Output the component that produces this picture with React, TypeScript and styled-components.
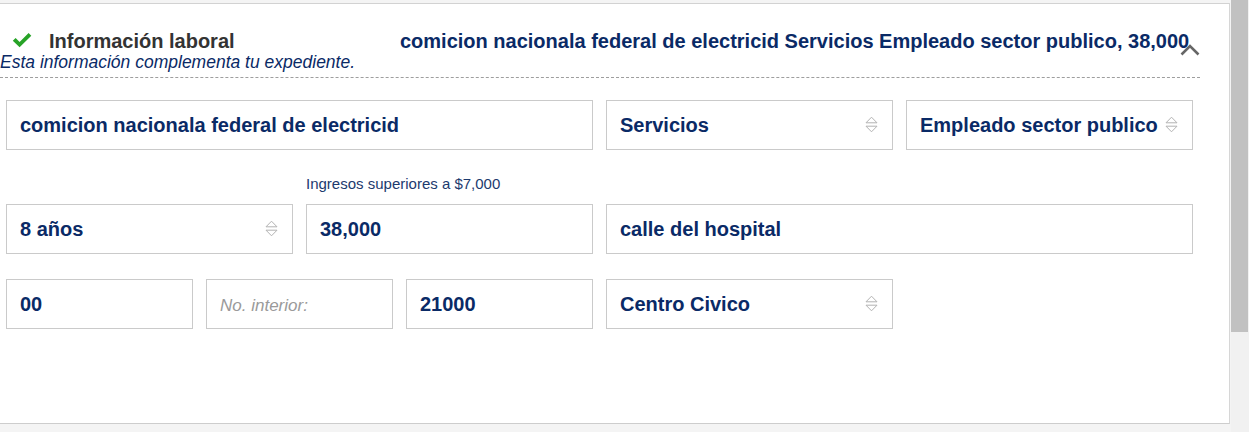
import styled, { createGlobalStyle, css } from 'styled-components'

const NAVY = '#0a2a66'

const GlobalStyle = createGlobalStyle`
  html, body {
    margin: 0;
    padding: 0;
    background: #f4f4f4;
    font-family: 'Liberation Sans', Arial, sans-serif;
  }
`

const Page = styled.div`
  display: flex;
  height: 432px;
  overflow: hidden;
  background: #f4f4f4;
`

const Main = styled.div`
  flex: 0 0 1231px;
  padding-top: 3px;
`

const Panel = styled.section`
  box-sizing: border-box;
  width: 1230px;
  height: 421px;
  background: #fff;
  border-top: 1px solid #d2d2d2;
  border-right: 1px solid #d6d6d6;
  border-bottom: 1px solid #cdcdcd;
`

const Scrollbar = styled.div`
  flex: 1;
  display: flex;
  flex-direction: column;
  padding-right: 1px;
  background: #f1f1f1;
`

const Thumb = styled.div`
  height: 332px;
  background: #c1c1c1;
`

const Header = styled.header`
  position: relative;
  box-sizing: border-box;
  width: 1200px;
  padding: 26px 0 5px;
  border-bottom: 1px dashed #9e9e9e;
`

const TitleRow = styled.div`
  display: flex;
  align-items: center;
  height: 22px;
`

const TitleGroup = styled.div`
  flex: none;
  display: flex;
  align-items: center;
  width: 400px;
`

const Check = styled.svg`
  margin: -2px 0 0 12px;
  width: 20px;
  height: 16px;
`

const Title = styled.h2`
  margin: 0 0 0 17px;
  font-size: 20px;
  font-weight: bold;
  line-height: 22px;
  color: #333;
`

const Summary = styled.p`
  margin: 0;
  font-size: 20px;
  font-weight: bold;
  line-height: 22px;
  color: ${NAVY};
  white-space: nowrap;
`

const Chevron = styled.svg`
  position: absolute;
  top: 39px;
  left: 1180px;
  width: 20px;
  height: 13px;
`

const Subtitle = styled.p`
  margin: 0;
  font-size: 17.5px;
  font-style: italic;
  line-height: 20px;
  color: ${NAVY};
`

const Form = styled.div`
  display: grid;
  grid-template-columns: repeat(12, 87px);
  column-gap: 13px;
  row-gap: 25px;
  align-items: end;
  margin: 22px 0 0 6px;
`

const Field = styled.label<{ $span: number }>`
  display: flex;
  flex-direction: column;
  grid-column: span ${({ $span }) => $span};
`

const FieldLabel = styled.span`
  margin-bottom: 12px;
  font-size: 15px;
  line-height: 17px;
  color: #1c3a6e;
`

const boxStyle = css`
  box-sizing: border-box;
  width: 100%;
  height: 50px;
  margin: 0;
  padding: 0 13px;
  font-family: 'Liberation Sans', Arial, sans-serif;
  font-size: 20px;
  font-weight: bold;
  color: ${NAVY};
  background: #fff;
  border: 1px solid #cacaca;
  border-radius: 0;
  outline: none;
`

const Input = styled.input`
  ${boxStyle}

  &::placeholder {
    font-size: 17px;
    font-style: italic;
    font-weight: normal;
    color: #9a9a9a;
  }
`

const SelectBox = styled.div`
  position: relative;
`

const Select = styled.select`
  ${boxStyle}
  appearance: none;
  padding-right: 34px;
`

const Arrows = styled.svg`
  position: absolute;
  top: 16px;
  right: 15px;
  width: 13px;
  height: 17px;
  pointer-events: none;
`

type FieldDef = {
  span: number
  value?: string
  placeholder?: string
  label?: string
  select?: boolean
}

const FIELDS: FieldDef[] = [
  { span: 6, value: 'comicion nacionala federal de electricid' },
  { span: 3, value: 'Servicios', select: true },
  { span: 3, value: 'Empleado sector publico', select: true },
  { span: 3, value: '8 años', select: true },
  { span: 3, value: '38,000', label: 'Ingresos superiores a $7,000' },
  { span: 6, value: 'calle del hospital' },
  { span: 2, value: '00' },
  { span: 2, placeholder: 'No. interior:' },
  { span: 2, value: '21000' },
  { span: 3, value: 'Centro Civico', select: true },
]

const SelectArrows = () => (
  <Arrows viewBox="0 0 13 17">
    <path d="M1 6.8 L6.5 1.2 L12 6.8 Z" fill="#fff" stroke="#b3b3b3" strokeWidth="1" />
    <path d="M1 10.2 L12 10.2 L6.5 15.8 Z" fill="#fff" stroke="#b3b3b3" strokeWidth="1" />
  </Arrows>
)

const App = () => {
  return (
    <Page>
      <GlobalStyle />
      <Main>
        <Panel>
          <Header>
            <TitleRow>
              <TitleGroup>
                <Check viewBox="0 0 20 16">
                  <path d="M0.8 8.8 L3.6 6 L7.6 10 L16.6 1 L19.3 3.7 L7.6 15.2 Z" fill="#27a327" />
                </Check>
                <Title>Información laboral</Title>
              </TitleGroup>
              <Summary>
                comicion nacionala federal de electricid Servicios Empleado sector publico, 38,000
              </Summary>
            </TitleRow>
            <Subtitle>Esta información complementa tu expediente.</Subtitle>
            <Chevron viewBox="0 0 20 13">
              <polyline points="1.5,11.5 10,3 18.5,11.5" fill="none" stroke="#666" strokeWidth="2.6" />
            </Chevron>
          </Header>

          <Form>
            {FIELDS.map((f, i) => (
              <Field key={i} $span={f.span}>
                {f.label ? <FieldLabel>{f.label}</FieldLabel> : null}
                {f.select ? (
                  <SelectBox>
                    <Select defaultValue={f.value}>
                      <option>{f.value}</option>
                    </Select>
                    <SelectArrows />
                  </SelectBox>
                ) : (
                  <Input readOnly value={f.value ?? ''} placeholder={f.placeholder} />
                )}
              </Field>
            ))}
          </Form>
        </Panel>
      </Main>
      <Scrollbar>
        <Thumb />
      </Scrollbar>
    </Page>
  )
}

export default App
